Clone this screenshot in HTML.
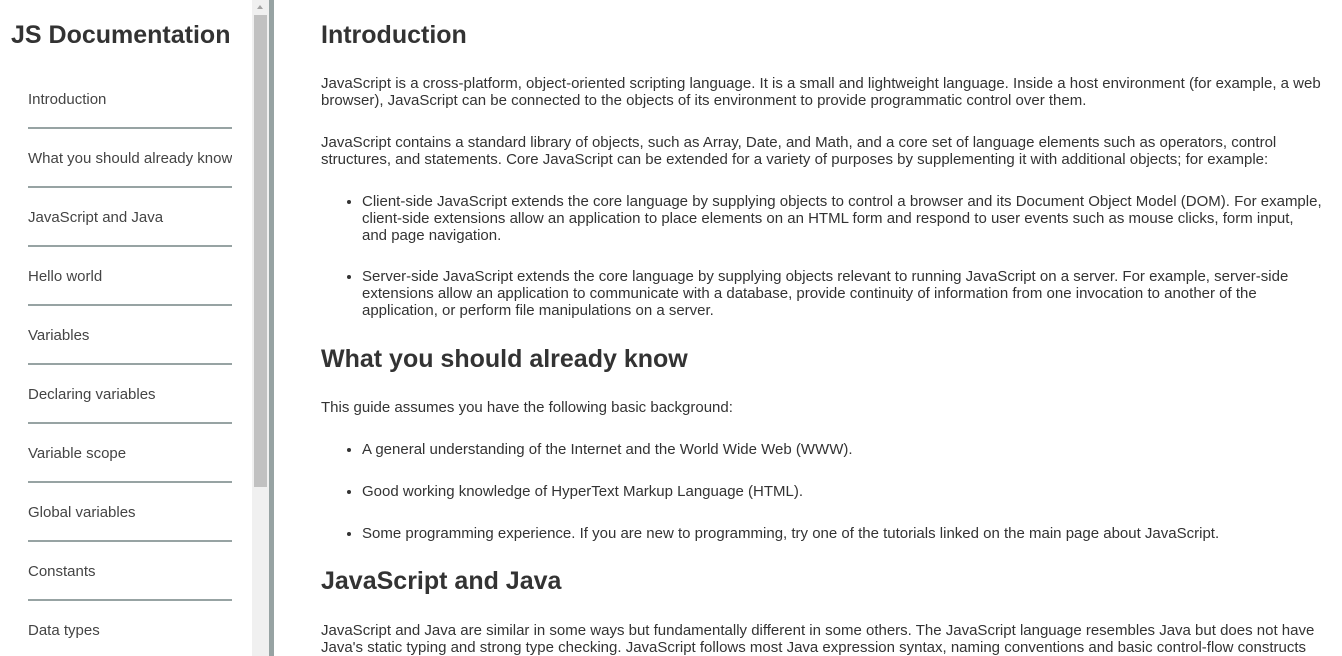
<!DOCTYPE html>
<html><head><meta charset="utf-8"><style>
html,body{margin:0;padding:0;width:1342px;height:656px;overflow:hidden;font-family:"Liberation Sans",Arial,sans-serif;color:#333;background:#fff}
#nav{position:absolute;left:0;top:0;width:252px;height:656px;overflow:hidden}
#nav h1{margin:0;position:absolute;left:11px;top:21px;font-size:25px;font-weight:bold;color:#333;white-space:nowrap}
#nav ul{list-style:none;margin:0;padding:0;position:absolute;left:28px;top:70px;width:204px}
#nav li{height:56px;padding-top:1px;border-bottom:2px solid #97a3a3;font-size:15px;color:#444;line-height:57px;white-space:nowrap;overflow:hidden}
#sb{position:absolute;left:252px;top:0;width:17px;height:656px;background:#f0f0f0}
#thumb{position:absolute;left:2px;top:15px;width:13px;height:472px;background:#c1c1c1}
#bd{position:absolute;left:269px;top:0;width:5px;height:656px;background:#97a3a3}
#main{position:absolute;left:321px;top:0;width:1001.5px;font-size:15px;line-height:17px}
h2{font-size:25px;font-weight:bold;margin:0;line-height:28px;color:#333}
p{margin:0}
ul.b{margin:0;padding-left:41px}
ul.b li{margin:0}
</style></head><body>
<div id="nav"><h1>JS Documentation</h1>
<ul><li>Introduction</li><li>What you should already know</li><li>JavaScript and Java</li><li>Hello world</li><li>Variables</li><li>Declaring variables</li><li>Variable scope</li><li>Global variables</li><li>Constants</li><li>Data types</li></ul></div>
<div id="sb"><div id="thumb"></div><div style="position:absolute;left:5px;top:5px;width:0;height:0;border-left:3px solid transparent;border-right:3px solid transparent;border-bottom:4px solid #a3a3a3"></div></div>
<div id="bd"></div>
<div id="main">
<h2 style="position:absolute;top:21px">Introduction</h2>
<p style="position:absolute;top:75px;width:1002px">JavaScript is a cross-platform, object-oriented scripting language. It is a small and lightweight language. Inside a host environment (for example, a web browser), JavaScript can be connected to the objects of its environment to provide programmatic control over them.</p>
<p style="position:absolute;top:134px;width:1002px">JavaScript contains a standard library of objects, such as Array, Date, and Math, and a core set of language elements such as operators, control structures, and statements. Core JavaScript can be extended for a variety of purposes by supplementing it with additional objects; for example:</p>
<ul class="b" style="position:absolute;top:193px;width:960px"><li>Client-side JavaScript extends the core language by supplying objects to control a browser and its Document Object Model (DOM). For example, client-side extensions allow an application to place elements on an HTML form and respond to user events such as mouse clicks, form input, and page navigation.</li></ul>
<ul class="b" style="position:absolute;top:268px;width:960px"><li>Server-side JavaScript extends the core language by supplying objects relevant to running JavaScript on a server. For example, server-side extensions allow an application to communicate with a database, provide continuity of information from one invocation to another of the application, or perform file manipulations on a server.</li></ul>
<h2 style="position:absolute;top:345px">What you should already know</h2>
<p style="position:absolute;top:399px">This guide assumes you have the following basic background:</p>
<ul class="b" style="position:absolute;top:441px"><li>A general understanding of the Internet and the World Wide Web (WWW).</li></ul>
<ul class="b" style="position:absolute;top:483px"><li>Good working knowledge of HyperText Markup Language (HTML).</li></ul>
<ul class="b" style="position:absolute;top:525px"><li>Some programming experience. If you are new to programming, try one of the tutorials linked on the main page about JavaScript.</li></ul>
<h2 style="position:absolute;top:567px">JavaScript and Java</h2>
<p style="position:absolute;top:622px;width:1002px">JavaScript and Java are similar in some ways but fundamentally different in some others. The JavaScript language resembles Java but does not have Java's static typing and strong type checking. JavaScript follows most Java expression syntax, naming conventions and basic control-flow constructs</p>
</div>
</body></html>
